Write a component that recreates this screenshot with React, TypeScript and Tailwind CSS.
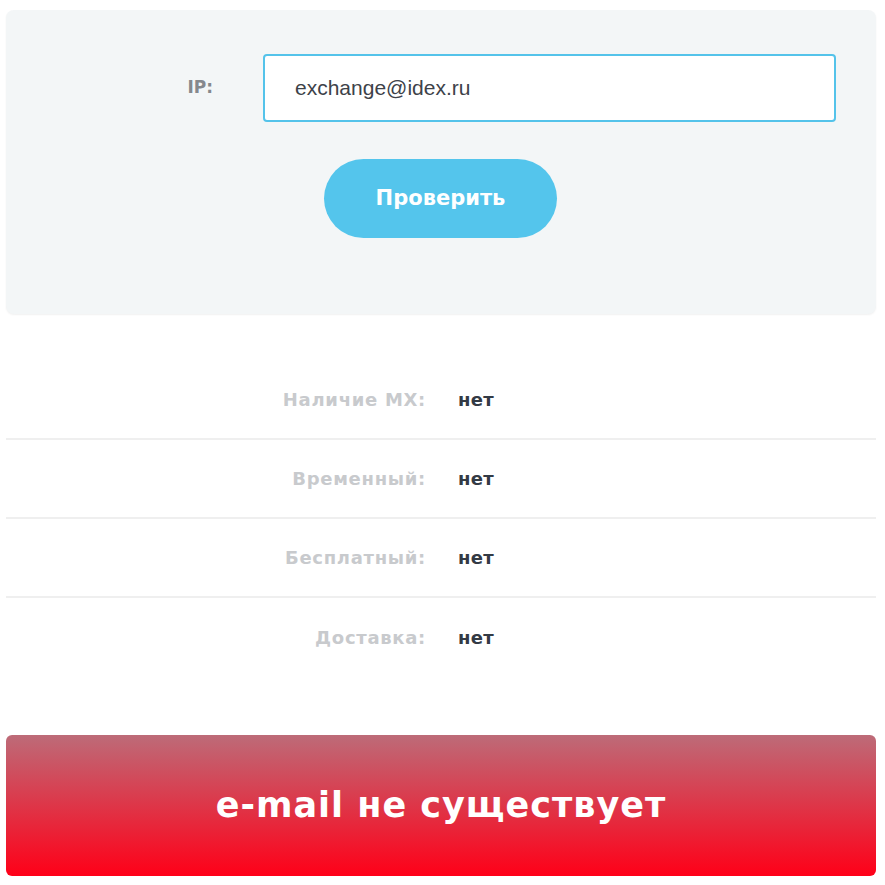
import React, { useState } from "react";

const rows = [
  { label: "Наличие MX:", value: "нет" },
  { label: "Временный:", value: "нет" },
  { label: "Бесплатный:", value: "нет" },
  { label: "Доставка:", value: "нет" },
];

export default function App() {
  const [email, setEmail] = useState("exchange@idex.ru");

  return (
    <div className="w-[885px] h-[885px] bg-white px-[6px] pt-[10px] font-['DejaVu_Sans',sans-serif]">
      {/* Check form */}
      <div className="h-[304px] w-[870px] rounded-lg bg-[#f3f6f7] shadow-[0_1px_2px_rgba(0,0,0,0.06)] pt-[44px]">
        <div className="flex items-center">
          <label className="w-[207px] text-right text-[17px] font-semibold text-[#85888d]">IP:</label>
          <input
            value={email}
            onChange={(e) => setEmail(e.target.value)}
            className="ml-[50px] h-[68px] w-[573px] rounded-[4px] border-2 border-[#54c3ea] bg-white pl-[30px] text-[21px] text-[#3d4249] font-['Liberation_Sans',sans-serif] outline-none"
          />
        </div>
        <button className="ml-[318px] mt-[37px] h-[79px] w-[233px] rounded-full bg-[#54c5ec] text-[21px] font-bold text-white">
          Проверить
        </button>
      </div>

      {/* Result rows */}
      <div className="mt-[47px] w-[870px]">
        {rows.map((r, i) => (
          <div
            key={r.label}
            className={`flex h-[79px] items-center ${i < rows.length - 1 ? "border-b-2 border-[#efefef]" : ""}`}
          >
            <span className="w-[420px] text-right text-[18px] tracking-[0.7px] font-bold text-[#c8cacd]">{r.label}</span>
            <span className="ml-[32px] text-[18px] tracking-[0.3px] font-bold text-[#333a44]">{r.value}</span>
          </div>
        ))}
      </div>

      {/* Verdict banner */}
      <div className="mt-[58px] flex h-[141px] w-[870px] items-center justify-center rounded-md bg-linear-to-b/srgb from-[#bd6b78] to-[#ff0018]">
        <span className="text-[35px] tracking-[1px] font-bold text-white">e-mail не существует</span>
      </div>
    </div>
  );
}
